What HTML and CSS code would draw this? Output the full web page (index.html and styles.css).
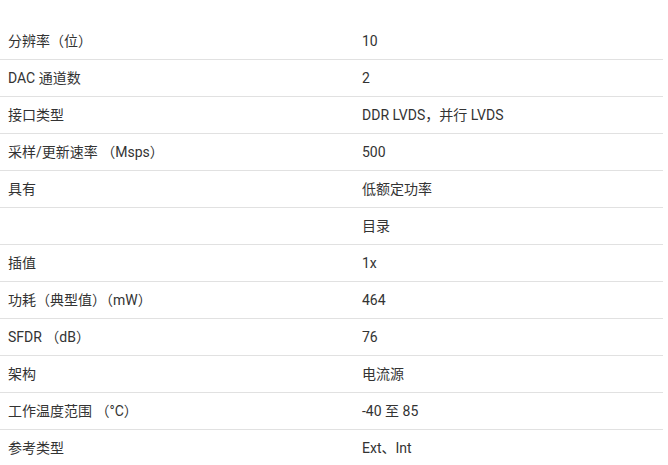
FILE: index.html
```html
<!DOCTYPE html>
<html lang="zh-CN">
<head>
<meta charset="utf-8">
<link rel="stylesheet" href="styles.css">
</head>
<body>
<div class="spec-table">
  <div class="row"><div class="cell">分辨率（位）</div><div class="cell">10</div></div>
  <div class="row"><div class="cell">DAC 通道数</div><div class="cell">2</div></div>
  <div class="row"><div class="cell">接口类型</div><div class="cell">DDR LVDS，并行 LVDS</div></div>
  <div class="row"><div class="cell">采样/更新速率 （Msps）</div><div class="cell">500</div></div>
  <div class="row"><div class="cell">具有</div><div class="cell">低额定功率</div></div>
  <div class="row"><div class="cell"></div><div class="cell">目录</div></div>
  <div class="row"><div class="cell">插值</div><div class="cell">1x</div></div>
  <div class="row"><div class="cell">功耗（典型值）（mW）</div><div class="cell">464</div></div>
  <div class="row"><div class="cell">SFDR （dB）</div><div class="cell">76</div></div>
  <div class="row"><div class="cell">架构</div><div class="cell">电流源</div></div>
  <div class="row"><div class="cell">工作温度范围 （°C）</div><div class="cell">-40 至 85</div></div>
  <div class="row"><div class="cell">参考类型</div><div class="cell">Ext、Int</div></div>
</div>
</body>
</html>
```
FILE: styles.css
```css
html, body {
  margin: 0;
  padding: 0;
  background: #fff;
}
body {
  font-family: Roboto, "Noto Sans CJK SC", sans-serif;
  font-size: 14px;
  color: #333;
  padding-top: 23px;
}
.spec-table {
  width: 663px;
}
.row {
  display: grid;
  grid-template-columns: 354px 1fr;
  height: 36px;
  border-bottom: 1px solid #e1e1e1;
  align-items: center;
}
.cell {
  padding-left: 8px;
  line-height: 20px;
  white-space: nowrap;
}
```
